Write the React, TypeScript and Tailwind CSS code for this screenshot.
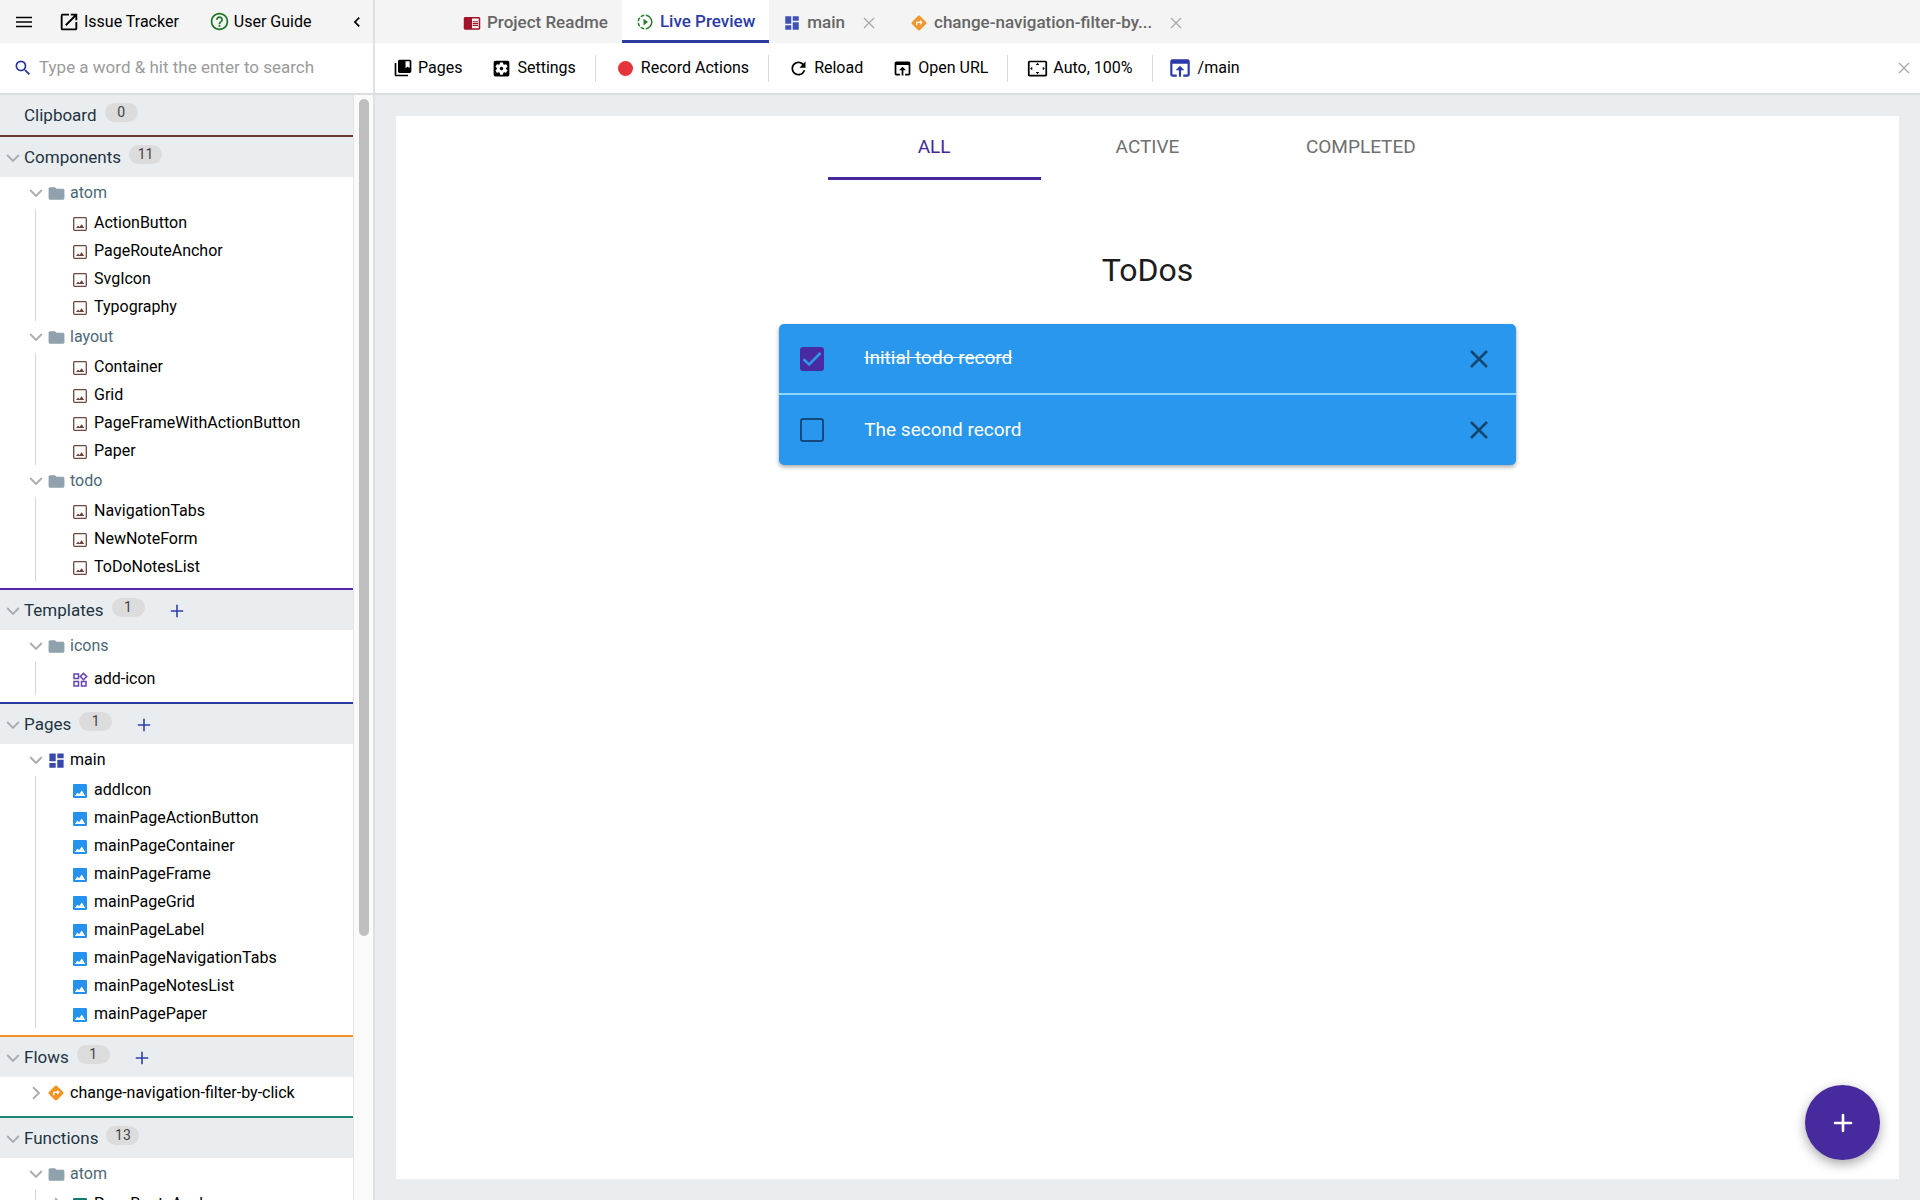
import type { ReactNode } from "react";
import {
  MdChevronLeft,
  MdChromeReaderMode,
  MdCollectionsBookmark,
  MdDashboard,
  MdDirections,
  MdFolder,
  MdHelpOutline,
  MdLaunch,
  MdOpenInBrowser,
  MdOutlineWidgets,
  MdRefresh,
  MdSearch,
  MdSettingsApplications,
  MdSettingsOverscan,
  MdSlowMotionVideo,
} from "react-icons/md";

type IconProps = { className?: string };

function Chevron({ className = "" }: IconProps) {
  return (
    <svg viewBox="0 0 14 14" className={`size-3.5 shrink-0 ${className}`} fill="none" stroke="currentColor" strokeWidth="1.9" aria-hidden="true">
      <path d="M1.2 4 7 10 12.8 4" />
    </svg>
  );
}

function Cross({ className = "" }: IconProps) {
  return (
    <svg viewBox="0 0 12 12" className={className} fill="none" stroke="currentColor" strokeWidth="1.3" aria-hidden="true">
      <path d="M1 1 11 11M11 1 1 11" />
    </svg>
  );
}

function Plus({ className = "" }: IconProps) {
  return (
    <svg viewBox="0 0 14 14" className={className} fill="none" stroke="currentColor" strokeWidth="1.6" aria-hidden="true">
      <path d="M7 .8V13.2M.8 7H13.2" />
    </svg>
  );
}

function MenuIcon() {
  return (
    <svg viewBox="0 0 16 12" className="w-4" fill="none" stroke="currentColor" strokeWidth="1.6" aria-hidden="true">
      <path d="M0 1.5H16M0 6H16M0 10.5H16" />
    </svg>
  );
}

function ComponentIcon() {
  return (
    <svg viewBox="0 0 14 14" className="size-3.5 text-[#6d4740]" aria-hidden="true">
      <rect x=".7" y=".7" width="12.6" height="12.6" rx="1" fill="none" stroke="currentColor" strokeWidth="1.3" />
      <path d="M3 11 5 8.6 6.3 10 8.7 7.2 11.2 11Z" fill="currentColor" />
    </svg>
  );
}

function InstanceIcon() {
  return (
    <svg viewBox="0 0 14 14" className="size-3.5 text-[#2592ee]" aria-hidden="true">
      <rect width="14" height="14" rx="1.2" fill="currentColor" />
      <path d="M2 12 4.4 8.6 6 10.2 8.8 6.6 12.2 12Z" fill="#fff" />
    </svg>
  );
}

function FunctionIcon() {
  return (
    <svg viewBox="0 0 14 14" className="size-3.5 text-[#15796d]" aria-hidden="true">
      <rect width="14" height="14" rx="1.2" fill="currentColor" />
      <path d="M3 5H11M3 9H8" stroke="#fff" strokeWidth="1.4" />
    </svg>
  );
}

type SectionProps = {
  title: string;
  count: number;
  line?: string;
  open?: boolean;
  add?: boolean;
  children?: ReactNode;
};

function Section({ title, count, line = "", open = true, add = false, children }: SectionProps) {
  return (
    <section className={line}>
      <header className="flex h-10 items-center bg-[#e9edf0] pt-0.5 pl-1.5">
        <button type="button" className="flex items-center gap-1 text-[17px] text-[#1f3442]">
          <span className="flex size-3.5 items-center">{open && <Chevron className="text-[#a9adb1]" />}</span>
          {title}
        </button>
        <span className="mb-2 ml-2 flex h-[19px] w-[33px] items-center justify-center rounded-full bg-[#dcdcdd] text-sm text-[#444]">
          {count}
        </span>
        {add && (
          <button type="button" aria-label={`Add to ${title}`} className="ml-[23px] p-0.5 text-[#2e3fae]">
            <Plus className="size-3.5" />
          </button>
        )}
      </header>
      {children && <div className="pb-[7px]">{children}</div>}
    </section>
  );
}

type BranchProps = { label: string; icon: ReactNode; tone?: string; closed?: boolean; children?: ReactNode };

function Branch({ label, icon, tone = "text-black", closed = false, children }: BranchProps) {
  return (
    <div>
      <button type="button" className={`flex h-8 w-full items-center pl-[29px] text-base ${tone}`}>
        <Chevron className={closed ? "-rotate-90 text-[#a9adb1]" : "text-[#a9adb1]"} />
        <span className="ml-[3px] flex w-5 justify-center">{icon}</span>
        <span className="ml-1">{label}</span>
      </button>
      {children && <ul className="ml-[35px] border-l border-[#d6d6d6]">{children}</ul>}
    </div>
  );
}

function Leaf({ label, icon, height = "h-7" }: { label: string; icon: ReactNode; height?: string }) {
  return (
    <li>
      <button type="button" className={`flex w-full items-center pl-[35px] text-base text-black ${height}`}>
        <span className="flex w-[18px] justify-center pt-0.5">{icon}</span>
        <span className="ml-[5px]">{label}</span>
      </button>
    </li>
  );
}

const componentTree = [
  { folder: "atom", items: ["ActionButton", "PageRouteAnchor", "SvgIcon", "Typography"] },
  { folder: "layout", items: ["Container", "Grid", "PageFrameWithActionButton", "Paper"] },
  { folder: "todo", items: ["NavigationTabs", "NewNoteForm", "ToDoNotesList"] },
];

const mainItems = [
  "addIcon",
  "mainPageActionButton",
  "mainPageContainer",
  "mainPageFrame",
  "mainPageGrid",
  "mainPageLabel",
  "mainPageNavigationTabs",
  "mainPageNotesList",
  "mainPagePaper",
];

const folderIcon = <MdFolder className="size-[19px] text-[#8fa1ac]" />;

function Sidebar() {
  return (
    <aside className="flex w-[375px] shrink-0 flex-col border-r-2 border-[#dfe0e2] bg-white">
      <div className="flex h-[43px] shrink-0 items-center bg-[#f4f4f4] pl-4 text-base">
        <button type="button" aria-label="Menu">
          <MenuIcon />
        </button>
        <a href="#issues" className="ml-[26px] flex items-center gap-1">
          <MdLaunch className="size-[22px]" />
          Issue Tracker
        </a>
        <a href="#guide" className="ml-[30px] flex items-center gap-1">
          <MdHelpOutline className="size-[21px] text-[#1b7a26]" />
          User Guide
        </a>
        <button type="button" aria-label="Collapse sidebar" className="mr-1.5 ml-auto">
          <MdChevronLeft className="size-5" />
        </button>
      </div>
      <label className="flex h-[52px] shrink-0 items-center gap-1.5 border-b-2 border-[#dcdddf] pl-[13px]">
        <MdSearch className="size-5 text-[#2832a0]" />
        <input
          type="search"
          aria-label="Search"
          placeholder="Type a word & hit the enter to search"
          className="w-80 bg-transparent text-[17px] outline-none placeholder:text-[#9b9b9b]"
        />
      </label>
      <div className="flex min-h-0 grow">
        <nav className="min-w-0 grow overflow-hidden">
          <Section title="Clipboard" count={0} open={false} />
          <Section title="Components" count={11} line="border-t-2 border-[#6a3b30]">
            {componentTree.map(({ folder, items }) => (
              <Branch key={folder} label={folder} icon={folderIcon} tone="text-[#4d6776]">
                {items.map((item) => (
                  <Leaf key={item} label={item} icon={<ComponentIcon />} />
                ))}
              </Branch>
            ))}
          </Section>
          <Section title="Templates" count={1} add line="border-t-2 border-[#5526a5]">
            <Branch label="icons" icon={folderIcon} tone="text-[#4d6776]">
              <Leaf label="add-icon" height="h-[33px]" icon={<MdOutlineWidgets className="size-[18px] text-[#6a42b8]" />} />
            </Branch>
          </Section>
          <Section title="Pages" count={1} add line="border-t-2 border-[#283a9f]">
            <Branch label="main" icon={<MdDashboard className="size-[19px] text-[#3948ab]" />}>
              {mainItems.map((item) => (
                <Leaf key={item} label={item} icon={<InstanceIcon />} />
              ))}
            </Branch>
          </Section>
          <Section title="Flows" count={1} add line="border-t-2 border-[#f39325]">
            <Branch closed label="change-navigation-filter-by-click" icon={<MdDirections className="size-[18px] text-[#f6921e]" />} />
          </Section>
          <Section title="Functions" count={13} line="border-t-2 border-[#1b8578]">
            <Branch label="atom" icon={folderIcon} tone="text-[#4d6776]">
              <li>
                <button type="button" className="flex h-7 w-full items-center pl-[15px] text-base text-black">
                  <Chevron className="-rotate-90 text-[#a9adb1]" />
                  <span className="ml-1.5 flex w-[18px] justify-center pt-0.5">
                    <FunctionIcon />
                  </span>
                  <span className="ml-[5px]">PageRouteAnchor</span>
                </button>
              </li>
            </Branch>
          </Section>
        </nav>
        <div className="w-5 shrink-0 border-l border-[#e4e4e4] bg-[#fafafa] pt-1 pl-[5px]">
          <div className="h-[76%] w-2.5 rounded-full bg-[#bfbfbf]" />
        </div>
      </div>
    </aside>
  );
}

function DocTab({ icon, label, active = false, closable = false }: { icon: ReactNode; label: string; active?: boolean; closable?: boolean }) {
  return (
    <div
      className={
        active
          ? "flex items-center border-b-3 border-[#2b3a9e] bg-white px-3.5 pt-1 text-[#2b3aa8]"
          : "flex items-center px-3.5 pt-0.5 text-[#666]"
      }
    >
      <button type="button" role="tab" aria-selected={active} className="flex items-center gap-1.5 text-[17px] font-medium">
        {icon}
        {label}
      </button>
      {closable && (
        <button type="button" aria-label={`Close ${label}`} className="mr-[7px] ml-[18px] text-[#a8a8a8]">
          <Cross className="size-3" />
        </button>
      )}
    </div>
  );
}

function Tool({ icon, label }: { icon: ReactNode; label: string }) {
  return (
    <button type="button" className="flex items-center gap-[5px] text-base text-black">
      {icon}
      {label}
    </button>
  );
}

function Divider() {
  return <div className="h-[27px] w-px bg-[#d9d9d9]" />;
}

function Todo({ text, done = false }: { text: string; done?: boolean }) {
  return (
    <li className="flex h-[70px] items-center pr-7 pl-[21px] first:h-[71px]">
      <label className="flex items-center gap-10 text-[19px] text-white">
        <span className="relative flex size-6">
          <input
            type="checkbox"
            defaultChecked={done}
            className="peer size-6 appearance-none rounded-[3px] border-2 border-[#124a7c] checked:border-[#4a2aa2] checked:bg-[#4a2aa2]"
          />
          <svg viewBox="0 0 24 24" className="pointer-events-none absolute inset-0 hidden peer-checked:block" fill="none" stroke="#2e97ef" strokeWidth="2.6" aria-hidden="true">
            <path d="M3.5 12.2 9.2 17.5 20.5 6" />
          </svg>
        </span>
        <span className={done ? "line-through" : ""}>{text}</span>
      </label>
      <button type="button" aria-label={`Remove ${text}`} className="ml-auto text-[#14456f]">
        <svg viewBox="0 0 18 18" className="size-[18px]" fill="none" stroke="currentColor" strokeWidth="2.5" aria-hidden="true">
          <path d="M1 1 17 17M17 1 1 17" />
        </svg>
      </button>
    </li>
  );
}

function Preview() {
  return (
    <div className="relative grow bg-white">
      <div role="tablist" className="mx-auto grid w-[640px] grid-cols-3 text-[19px] text-[#6f6f6f]">
        <button type="button" role="tab" aria-selected="true" className="h-16 border-b-3 border-[#45299c] pt-0.5 text-[#45299c]">
          ALL
        </button>
        <button type="button" role="tab" aria-selected="false" className="h-16 border-b-3 border-transparent pt-0.5">
          ACTIVE
        </button>
        <button type="button" role="tab" aria-selected="false" className="h-16 border-b-3 border-transparent pt-0.5">
          COMPLETED
        </button>
      </div>
      <h1 className="pt-[70px] text-center text-[32px] leading-10 text-[#1c1c1c]">ToDos</h1>
      <ul className="mx-auto mt-[34px] w-[49%] divide-y-2 divide-[#8ad9fb] rounded-[5px] bg-[#2a97ee] shadow-[0_2px_4px_rgba(0,0,0,0.35)]">
        <Todo text="Initial todo record" done />
        <Todo text="The second record" />
      </ul>
      <button
        type="button"
        aria-label="Add todo"
        className="absolute right-[19px] bottom-[19px] flex size-[75px] items-center justify-center rounded-full bg-[#472a9e] text-white shadow-[0_4px_12px_rgba(0,0,0,0.35)]"
      >
        <svg viewBox="0 0 20 20" className="size-5" fill="none" stroke="currentColor" strokeWidth="2.6" strokeLinecap="round" aria-hidden="true">
          <path d="M10 2V18M2 10H18" />
        </svg>
      </button>
    </div>
  );
}

export default function App() {
  return (
    <div className="flex h-screen overflow-hidden bg-[#e9edf0] font-['Roboto',sans-serif] text-black">
      <Sidebar />
      <main className="flex min-w-0 grow flex-col">
        <div role="tablist" className="flex h-[43px] shrink-0 bg-[#f4f4f4] pl-[74px]">
          <DocTab icon={<MdChromeReaderMode className="size-[18px] text-[#a3142a]" />} label="Project Readme" />
          <DocTab active icon={<MdSlowMotionVideo className="size-[18px] text-[#2b7d32]" />} label="Live Preview" />
          <DocTab closable icon={<MdDashboard className="size-[18px] text-[#3f51b5]" />} label="main" />
          <DocTab closable icon={<MdDirections className="size-[18px] text-[#f0962a]" />} label="change-navigation-filter-by..." />
        </div>
        <div className="flex h-[52px] shrink-0 items-center border-b-2 border-[#dcdddf] bg-white pr-2.5 pl-[18px]">
          <div className="flex gap-[29px] pr-[19px]">
            <Tool icon={<MdCollectionsBookmark className="size-5" />} label="Pages" />
            <Tool icon={<MdSettingsApplications className="size-[21px]" />} label="Settings" />
          </div>
          <Divider />
          <div className="flex pr-[19px] pl-[22px]">
            <Tool icon={<span className="mr-[3px] size-[15px] rounded-full bg-[#e5343b]" />} label="Record Actions" />
          </div>
          <Divider />
          <div className="flex gap-[29px] px-[19px]">
            <Tool icon={<MdRefresh className="size-[21px]" />} label="Reload" />
            <Tool icon={<MdOpenInBrowser className="size-[21px]" />} label="Open URL" />
          </div>
          <Divider />
          <div className="flex px-[19px]">
            <Tool icon={<MdSettingsOverscan className="size-[21px]" />} label="Auto, 100%" />
          </div>
          <Divider />
          <div className="flex px-3.5">
            <Tool icon={<MdOpenInBrowser className="size-[26px] text-[#2b3aa8]" />} label="/main" />
          </div>
          <button type="button" aria-label="Close preview" className="ml-auto text-[#a8a8a8]">
            <Cross className="size-3" />
          </button>
        </div>
        <div className="flex grow px-[21px] py-[21px]">
          <Preview />
        </div>
      </main>
    </div>
  );
}
